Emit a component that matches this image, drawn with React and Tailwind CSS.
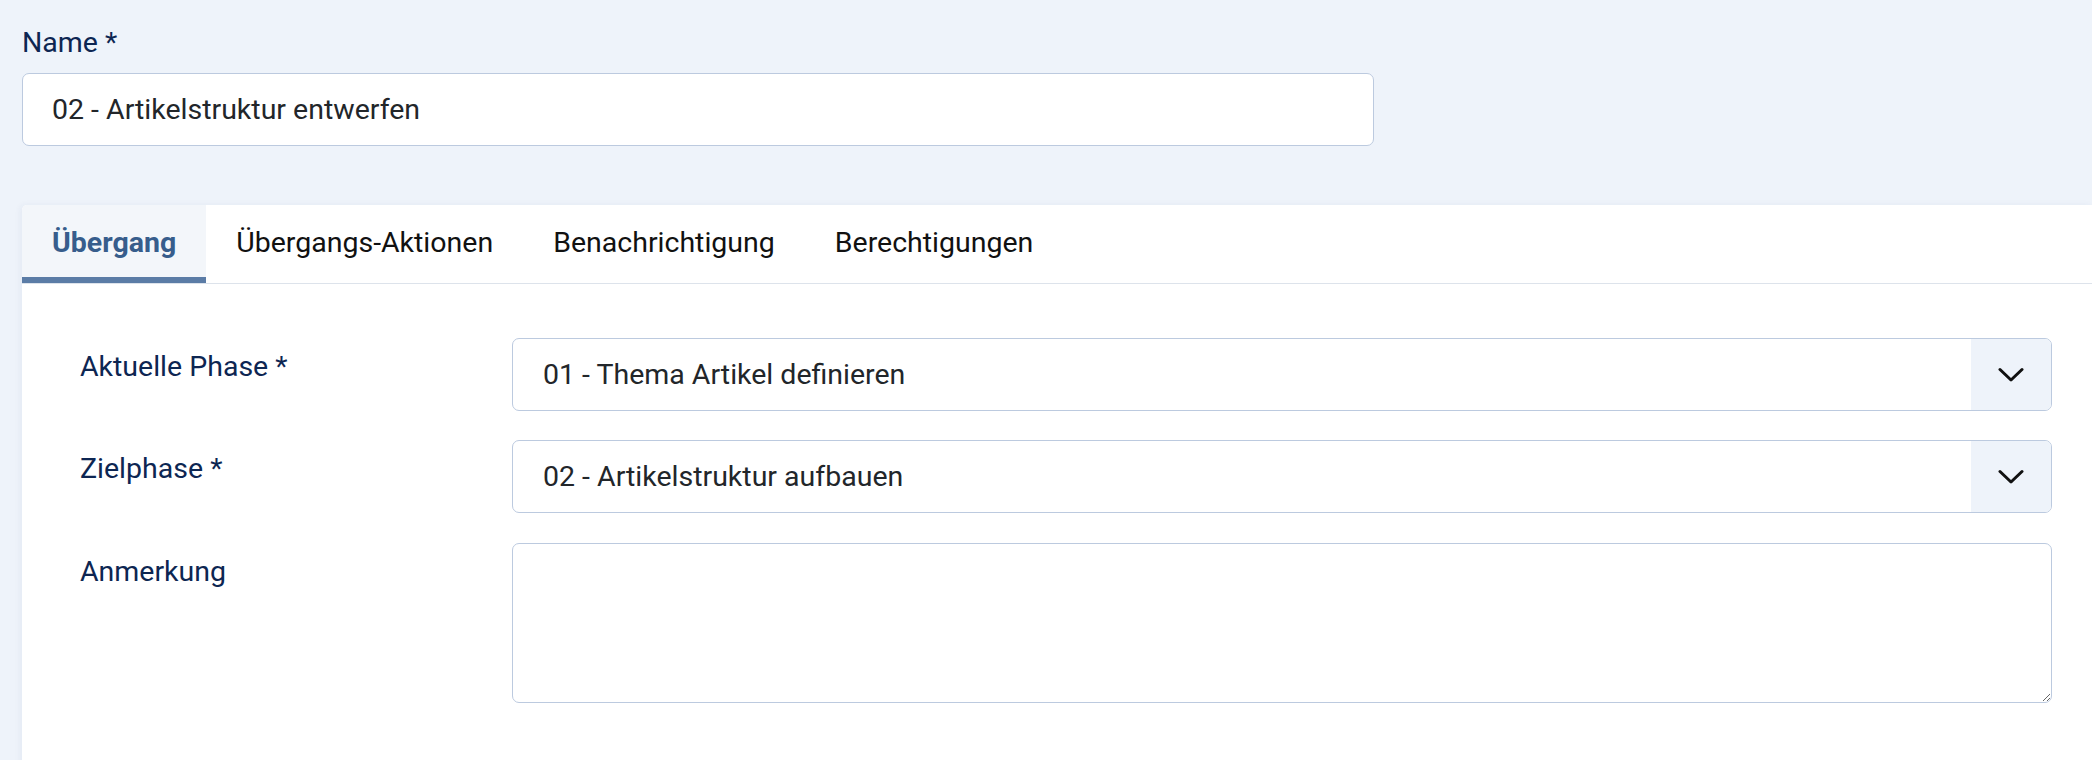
import React from 'react';

const Chevron = () => (
    <svg width="26" height="16" viewBox="0 0 26 16" fill="none">
        <path d="M2 2.5 L13 13 L24 2.5" stroke="#111" strokeWidth="3" strokeLinecap="round" strokeLinejoin="round" />
    </svg>
);

const FakeSelect = ({ value }) => (
    <div className="flex h-[73px] w-full overflow-hidden rounded-[7px] border border-[#bccadf] bg-white">
        <div className="flex flex-1 items-center pl-[30px] text-[28.5px] leading-[36px] text-[#22262a]">{value}</div>
        <div className="flex w-[80px] items-center justify-center bg-[#eef3fa]">
            <Chevron />
        </div>
    </div>
);

const FormRow = ({ label, children }) => (
    <div className="flex">
        <div className="w-[432px] shrink-0 pt-[11px] text-[28.5px] leading-[36px] text-[#0d2652]">{label}</div>
        <div className="w-[1540px]">{children}</div>
    </div>
);

const App = () => {
    const tabs = ['Übergang', 'Übergangs-Aktionen', 'Benachrichtigung', 'Berechtigungen'];

    return (
        <div className="h-[760px] w-[2092px] overflow-hidden bg-[#eef3fa] font-['Roboto',sans-serif]">
            {/* Name field */}
            <div className="px-[22px] pt-[25px]">
                <label className="block text-[28.5px] leading-[36px] text-[#0d2652]">Name *</label>
                <div className="mt-[12px] flex h-[73px] w-[1352px] items-center rounded-[7px] border border-[#bccadf] bg-white pl-[29px] text-[28.5px] leading-[36px] text-[#22262a]">
                    02 - Artikelstruktur entwerfen
                </div>
            </div>

            {/* Tab panel */}
            <div className="ml-[22px] mt-[59px] h-[600px] rounded-tl-[5px] bg-white shadow-[-2px_0_6px_rgba(30,60,110,0.05)]">
                <div className="flex border-b border-[#dde3eb]">
                    {tabs.map((tab, i) => (
                        <div
                            key={tab}
                            className={
                                i === 0
                                    ? 'rounded-tl-[5px] border-b-[6px] border-[#5b7ca6] bg-[#f3f6fa] px-[30px] pb-[16px] pt-[20px] text-[28.5px] font-bold leading-[36px] text-[#375d8c]'
                                    : 'border-b-[6px] border-transparent px-[30px] pb-[16px] pt-[20px] text-[28.5px] leading-[36px] text-[#111]'
                            }
                        >
                            {tab}
                        </div>
                    ))}
                </div>

                <div className="flex flex-col gap-[29px] pl-[58px] pt-[54px]">
                    <FormRow label="Aktuelle Phase *">
                        <FakeSelect value="01 - Thema Artikel definieren" />
                    </FormRow>
                    <FormRow label="Zielphase *">
                        <FakeSelect value="02 - Artikelstruktur aufbauen" />
                    </FormRow>
                    <div className="mt-[1px]">
                        <FormRow label="Anmerkung">
                            <textarea className="block h-[160px] w-full rounded-[7px] border border-[#bccadf] bg-white px-[30px] py-[16px] text-[28.5px] text-[#22262a] outline-none" />
                        </FormRow>
                    </div>
                </div>
            </div>
        </div>
    );
};

export default App;
